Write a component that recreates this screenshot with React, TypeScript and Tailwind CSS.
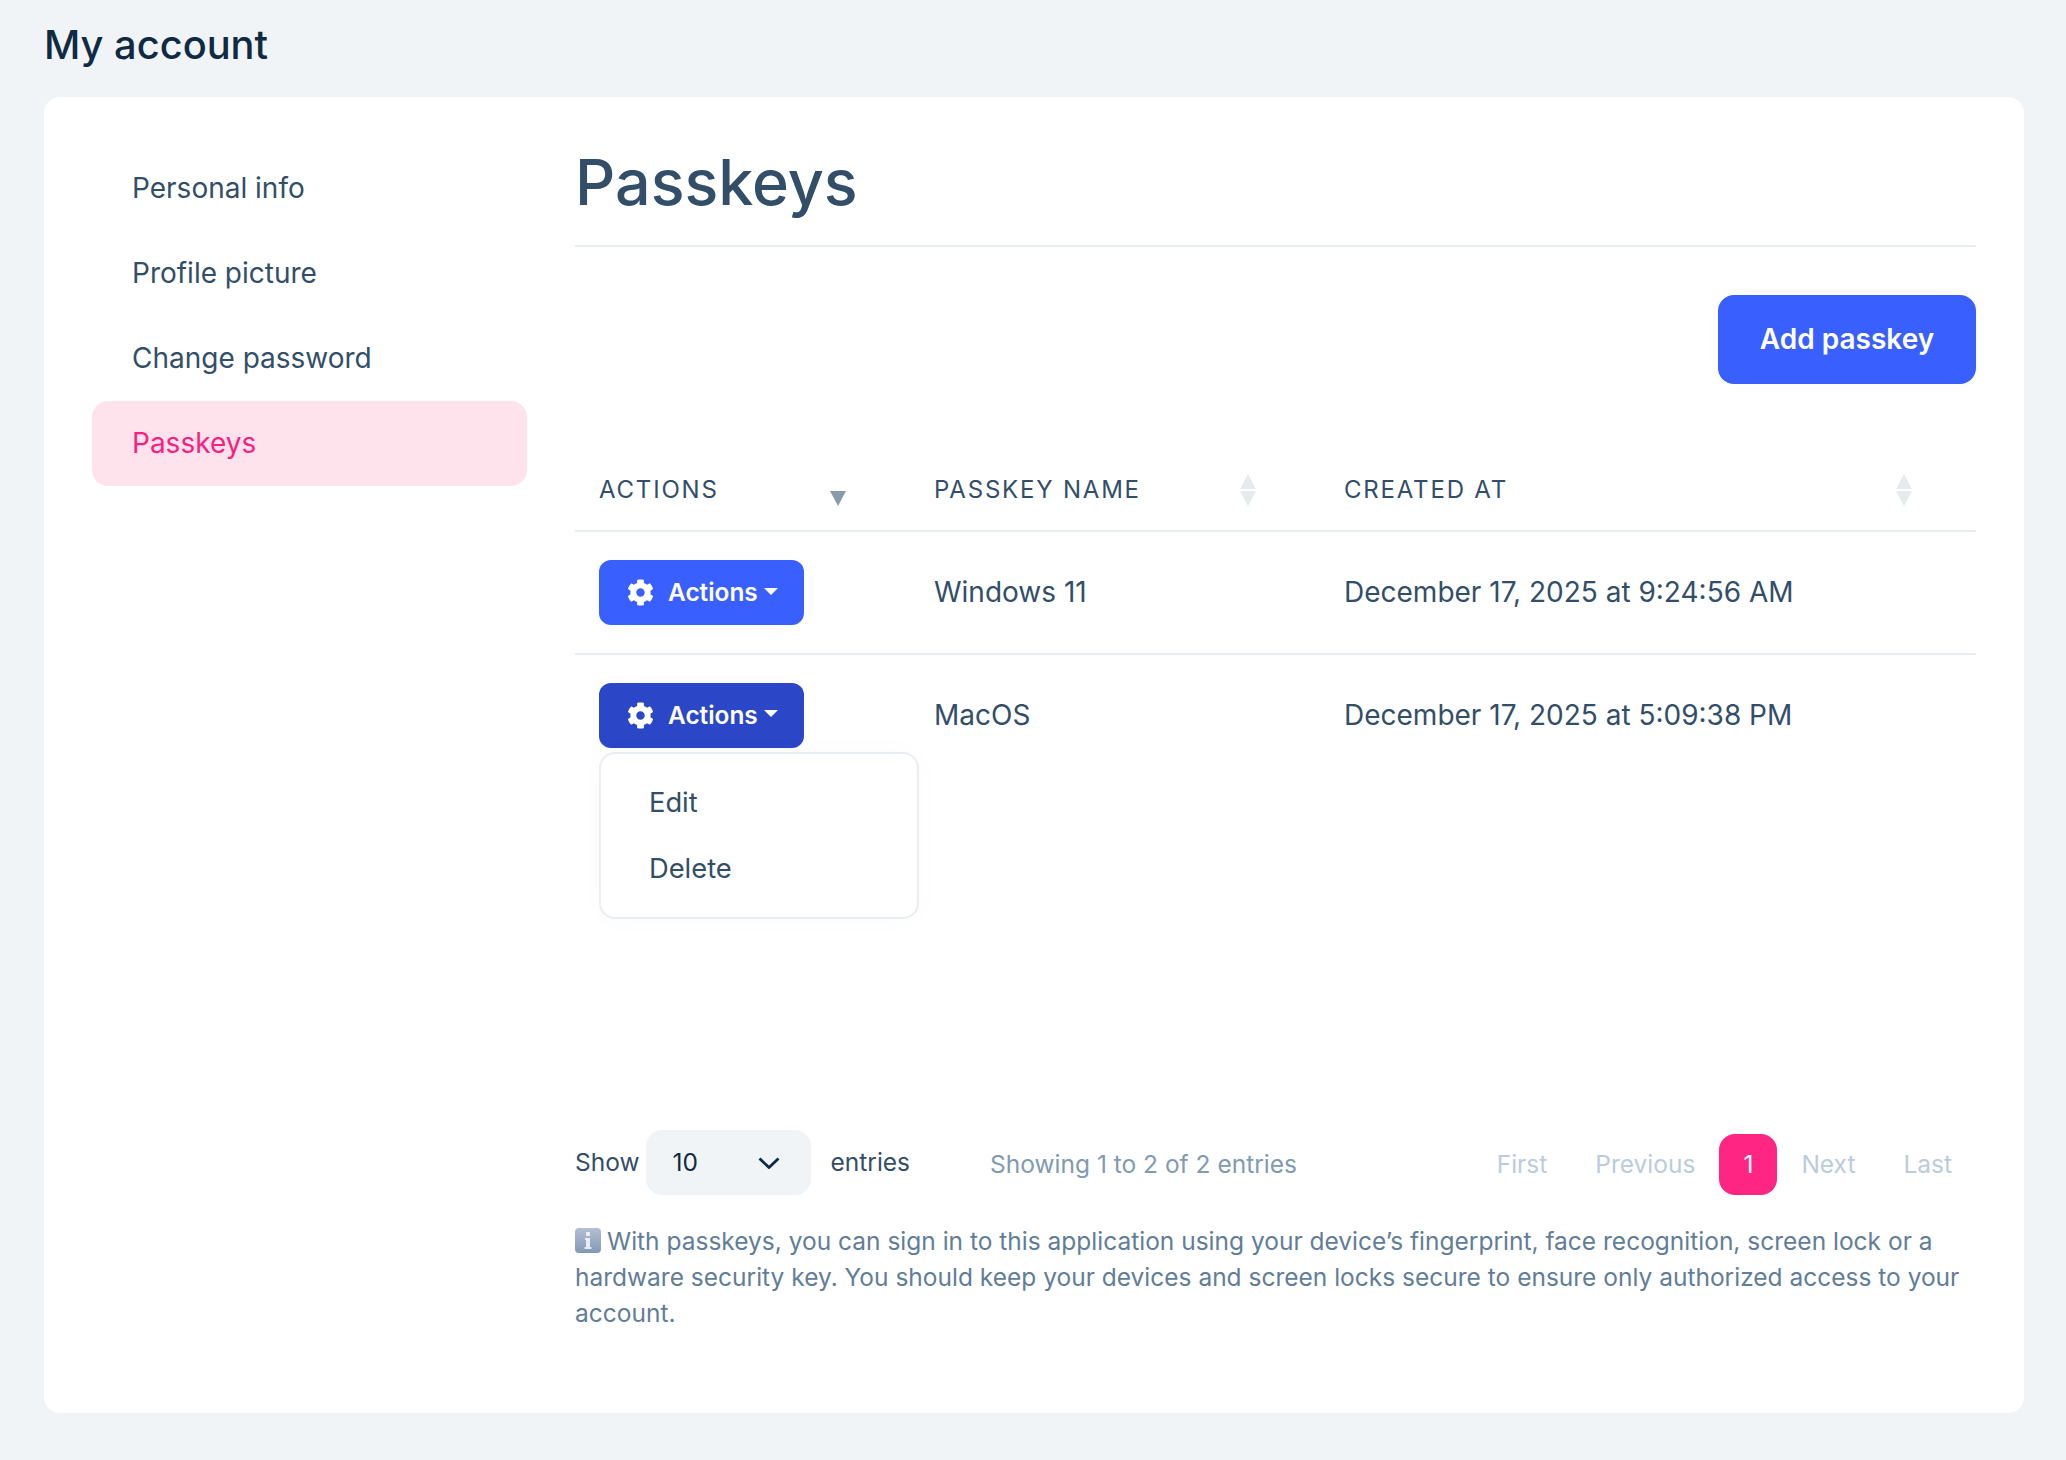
import React from 'react';
import { FaCog } from 'react-icons/fa';

const navItems = ['Personal info', 'Profile picture', 'Change password', 'Passkeys'];

const rows = [
  { name: 'Windows 11', created: 'December 17, 2025 at 9:24:56 AM', open: false },
  { name: 'MacOS', created: 'December 17, 2025 at 5:09:38 PM', open: true },
];

const SortIcon = ({ onlyDown }: { onlyDown?: boolean }) => (
  <svg width="18" height="33" viewBox="0 0 18 33" className="shrink-0">
    {!onlyDown && <path d="M9 0 L17 15 L1 15 Z" fill="#e6ebf0" />}
    <path d="M1 17 L17 17 L9 32 Z" fill={onlyDown ? '#8a9bab' : '#e6ebf0'} />
  </svg>
);

const InfoEmoji = () => (
  <svg width="26" height="25" viewBox="0 0 26 25" className="inline-block align-[-3px] mr-[6px]">
    <defs>
      <linearGradient id="infoGrad" x1="0" y1="0" x2="0" y2="1">
        <stop offset="0" stopColor="#b4c0d2" />
        <stop offset="1" stopColor="#8298b8" />
      </linearGradient>
    </defs>
    <rect x="0" y="0" width="26" height="25" rx="4" fill="url(#infoGrad)" />
    <rect x="11" y="4" width="4" height="4" fill="#e8edf3" />
    <path d="M10 10 H15 V19 H16.5 V21 H9.5 V19 H11 V12 H10 Z" fill="#e8edf3" />
  </svg>
);

const ActionsButton = ({ open }: { open: boolean }) => (
  <button
    className={`flex h-[65px] w-[205px] items-center rounded-[12px] pl-[28px] text-[24.4px] font-semibold text-white shadow-[0_0_24px_rgba(16,42,67,0.015)] ${
      open ? 'bg-[#2b46c6]' : 'bg-[#3a5fff]'
    }`}
  >
    <FaCog className="h-[27px] w-[27px]" />
    <span className="ml-[14px]">Actions</span>
    <span className="ml-[6px] mb-[3px] h-0 w-0 border-x-[7px] border-t-[7px] border-x-transparent border-t-white" />
  </button>
);

const DropdownMenu = () => (
  <div className="absolute left-[24px] top-[97px] z-10 flex h-[167px] w-[320px] flex-col rounded-[16px] border-2 border-[#e9eef3] bg-white pl-[48px] pt-[16px] text-[27.3px] text-[#334e68] shadow-[0_0_32px_rgba(16,42,67,0.02)]">
    <a className="flex h-[66px] items-center">Edit</a>
    <a className="flex h-[66px] items-center">Delete</a>
  </div>
);

export default function App() {
  return (
    <div className="min-h-[1460px] bg-[#f0f4f7] pl-[44px] pr-[42px] pt-[19px] font-['Inter',sans-serif] text-[#334e68]">
      <h1 className="mb-[20px] h-[58px] text-[39.8px] font-medium leading-[52px] text-[#102a43]">My account</h1>

      <div className="flex h-[1316px] rounded-[16px] bg-white pl-[48px] pr-[48px]">
        <nav className="mt-[49px] w-[435px] shrink-0">
          {navItems.map((item) => (
            <a
              key={item}
              className={`flex h-[85px] items-center rounded-[16px] pb-[2px] pl-[40px] text-[28px] ${
                item === 'Passkeys' ? 'bg-[#ffe3ec] text-[#fa1e80]' : ''
              }`}
            >
              {item}
            </a>
          ))}
        </nav>

        <main className="ml-[48px] min-w-0 flex-1">
          <h2 className="flex h-[150px] items-center border-b-2 border-[#e9eef3] pt-[22px] text-[62.8px] font-medium">Passkeys</h2>

          <div className="mt-[48px] flex justify-end">
            <button className="h-[89px] w-[258px] rounded-[16px] bg-[#3a5fff] pb-[2px] text-[28px] font-semibold text-white shadow-[0_0_24px_rgba(16,42,67,0.015)]">
              Add passkey
            </button>
          </div>

          <table className="mt-[62px] w-full table-fixed border-collapse text-[28px]">
            <colgroup>
              <col className="w-[335px]" />
              <col className="w-[410px]" />
              <col />
            </colgroup>
            <thead>
              <tr className="h-[85px] border-b-2 border-[#e9eef3] text-[24px] tracking-[1.8px]">
                <th className="pl-[24px] pr-[63px] pt-[4px] text-left font-normal">
                  <div className="flex items-center justify-between">
                    <span>ACTIONS</span>
                    <SortIcon onlyDown />
                  </div>
                </th>
                <th className="pl-[24px] pr-[63px] pt-[4px] text-left font-normal">
                  <div className="flex items-center justify-between">
                    <span>PASSKEY NAME</span>
                    <SortIcon />
                  </div>
                </th>
                <th className="pl-[24px] pr-[63px] pt-[4px] text-left font-normal">
                  <div className="flex items-center justify-between">
                    <span>CREATED AT</span>
                    <SortIcon />
                  </div>
                </th>
              </tr>
            </thead>
            <tbody>
              {rows.map((row, i) => (
                <tr key={row.name} className={i === 0 ? 'h-[123px] border-b-2 border-[#e9eef3]' : 'h-[123px]'}>
                  <td className={i === 0 ? 'relative pl-[24px]' : 'relative pb-[2px] pl-[24px]'}>
                    <ActionsButton open={row.open} />
                    {row.open && <DropdownMenu />}
                  </td>
                  <td className="pb-[2px] pl-[24px]">{row.name}</td>
                  <td className="pb-[2px] pl-[24px]">{row.created}</td>
                </tr>
              ))}
            </tbody>
          </table>

          <div className="mt-[353px] flex h-[65px] items-center text-[24.5px]">
            <span>Show</span>
            <div className="ml-[6px] flex h-[65px] w-[165px] items-center justify-between rounded-[16px] bg-[#f0f4f7] pl-[27px] pr-[31px] text-[#102a43]">
              <span>10</span>
              <svg width="22" height="12" viewBox="0 0 22 12" fill="none">
                <path d="M1.5 1.5 L11 10.5 L20.5 1.5" stroke="#102a43" strokeWidth="2.8" />
              </svg>
            </div>
            <span className="ml-[20px]">entries</span>
            <span className="ml-[80px] pt-[4px] text-[#829ab1]">Showing 1 to 2 of 2 entries</span>
            <div className="ml-auto flex items-center pt-[4px] text-[#bcccdc]">
              <span>First</span>
              <span className="ml-[48px]">Previous</span>
              <span className="ml-[24px] flex h-[61px] w-[58px] items-center justify-center rounded-[16px] bg-[#ff2583] text-white">1</span>
              <span className="ml-[24px]">Next</span>
              <span className="ml-[48px] mr-[24px]">Last</span>
            </div>
          </div>

          <p className="mt-[28px] text-[24.5px] leading-[36px] text-[#627d98]">
            <InfoEmoji />
            With passkeys, you can sign in to this application using your device’s fingerprint, face recognition, screen lock or a hardware security key. You should keep your devices and screen locks secure to ensure only authorized access to your account.
          </p>
        </main>
      </div>
    </div>
  );
}
